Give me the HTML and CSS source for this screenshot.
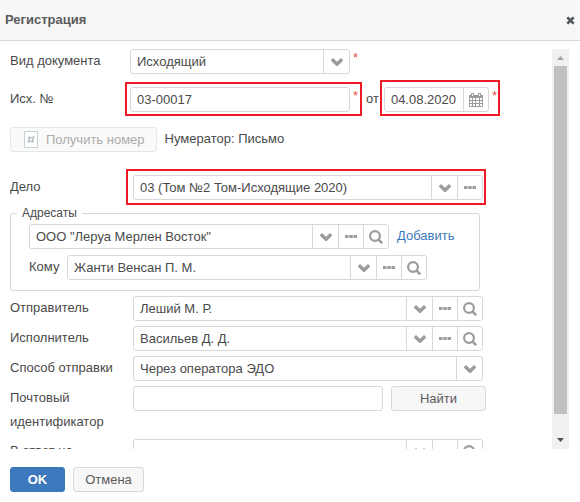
FILE: index.html
```html
<!DOCTYPE html>
<html lang="ru">
<head>
<meta charset="utf-8">
<meta name="viewport" content="width=device-width, initial-scale=1">
<title>Регистрация</title>
<link rel="stylesheet" href="styles.css">
</head>
<body>
<svg class="sprite" aria-hidden="true">
  <symbol id="chevron" viewBox="0 0 12 8"><path d="M0 2L2 0L6 3.700L10 0L12 2L12 2.800L6.700 8H5.300L0 2.800z" fill="currentColor"/></symbol>
  <symbol id="dots" viewBox="0 0 12 3"><path d="M0 0h3.500v3H0zM4.250 0h3.500v3h-3.500zM8.500 0h3.500v3H8.500z" fill="currentColor"/></symbol>
  <symbol id="search" viewBox="0 0 14 14"><circle cx="6" cy="6" r="4.900" fill="none" stroke="currentColor" stroke-width="2.200"/><path d="M9.300 9.300L13.200 13.200" stroke="currentColor" stroke-width="2.600"/></symbol>
</svg>
<div class="dialog">
  <header class="header">
    <h1 class="title">Регистрация</h1>
    <button class="close" type="button" aria-label="Закрыть"><svg width="9" height="9" viewBox="0 0 9 9"><path d="M1.300 1.300L7.700 7.700M7.700 1.300L1.300 7.700" stroke="currentColor" stroke-width="2.600"/></svg></button>
  </header>

  <div class="body">
    <form class="form" id="registration">
      <div class="row row-top">
        <label for="kind">Вид документа</label>
        <div class="group">
          <div class="combo select short">
            <select id="kind"><option>Исходящий</option></select>
            <span class="cell"><svg class="chevron"><use href="#chevron"/></svg></span>
          </div>
          <span class="required">*</span>
        </div>
      </div>

      <div class="row row-top">
        <label for="number">Исх. №</label>
        <div class="group">
          <div class="group marked">
            <div class="combo short"><input id="number" type="text" value="03-00017"></div>
            <span class="required">*</span>
          </div>
          <label class="from" for="date">от</label>
          <div class="group marked marked-date">
            <div class="combo date">
              <input id="date" type="text" value="04.08.2020">
              <button class="cell" type="button" aria-label="Календарь"><svg width="14" height="14" viewBox="0 0 14 14"><path d="M.5 2.500h13v11H.5z" fill="#fff" stroke="currentColor"/><path d="M0 2h14v3H0z" fill="currentColor"/><path d="M3.500 5v8M6.500 5v8M10.500 5v8M1 7.500h12M1 10.500h12" stroke="currentColor"/><path d="M3.500 0v3M10.500 0v3" stroke="currentColor" stroke-width="3"/><path d="M3.500 1v2M10.500 1v2" stroke="#fff"/></svg></button>
            </div>
            <span class="required">*</span>
          </div>
        </div>
      </div>

      <div class="numbering">
        <button class="button obtain" type="button" disabled>
          <svg width="14" height="17" viewBox="0 0 14 17"><path d="M.5.5h13v16H.5z" fill="#fff" stroke="#c3d2d6"/><path d="M6 5L4.500 12M9.500 5L8 12M3.500 7h7M3 10h7" stroke="#aeb4b6" fill="none"/></svg>
          Получить номер
        </button>
        <span>Нумератор: Письмо</span>
      </div>

      <div class="row case">
        <label for="case">Дело</label>
        <div class="marked marked-case">
          <div class="combo">
            <input id="case" type="text" value="03 (Том №2 Том-Исходящие 2020)">
            <button class="cell" type="button" aria-label="Список дел"><svg class="chevron"><use href="#chevron"/></svg></button>
            <button class="cell" type="button" aria-label="Выбрать дело"><svg class="dots"><use href="#dots"/></svg></button>
          </div>
        </div>
      </div>

      <fieldset class="recipients">
        <legend>Адресаты</legend>
        <div class="recipient">
          <div class="combo">
            <input type="text" aria-label="Организация" value="ООО &quot;Леруа Мерлен Восток&quot;">
            <button class="cell" type="button" aria-label="Список организаций"><svg class="chevron"><use href="#chevron"/></svg></button>
            <button class="cell" type="button" aria-label="Выбрать организацию"><svg class="dots"><use href="#dots"/></svg></button>
            <button class="cell" type="button" aria-label="Карточка организации"><svg class="search"><use href="#search"/></svg></button>
          </div>
          <a class="add" href="#">Добавить</a>
        </div>
        <div class="recipient">
          <label class="whom" for="whom">Кому</label>
          <div class="combo">
            <input id="whom" type="text" value="Жанти Венсан П. М.">
            <button class="cell" type="button" aria-label="Список контактов"><svg class="chevron"><use href="#chevron"/></svg></button>
            <button class="cell" type="button" aria-label="Выбрать контакт"><svg class="dots"><use href="#dots"/></svg></button>
            <button class="cell" type="button" aria-label="Карточка контакта"><svg class="search"><use href="#search"/></svg></button>
          </div>
        </div>
      </fieldset>

      <div class="fields">
        <div class="row">
          <label for="sender">Отправитель</label>
          <div class="combo">
            <input id="sender" type="text" value="Леший М. Р.">
            <button class="cell" type="button" aria-label="Список отправителей"><svg class="chevron"><use href="#chevron"/></svg></button>
            <button class="cell" type="button" aria-label="Выбрать отправителя"><svg class="dots"><use href="#dots"/></svg></button>
            <button class="cell" type="button" aria-label="Карточка отправителя"><svg class="search"><use href="#search"/></svg></button>
          </div>
        </div>
        <div class="row">
          <label for="executor">Исполнитель</label>
          <div class="combo">
            <input id="executor" type="text" value="Васильев Д. Д.">
            <button class="cell" type="button" aria-label="Список исполнителей"><svg class="chevron"><use href="#chevron"/></svg></button>
            <button class="cell" type="button" aria-label="Выбрать исполнителя"><svg class="dots"><use href="#dots"/></svg></button>
            <button class="cell" type="button" aria-label="Карточка исполнителя"><svg class="search"><use href="#search"/></svg></button>
          </div>
        </div>
        <div class="row">
          <label for="method">Способ отправки</label>
          <div class="combo select">
            <select id="method"><option>Через оператора ЭДО</option></select>
            <span class="cell"><svg class="chevron"><use href="#chevron"/></svg></span>
          </div>
        </div>
        <div class="row row-post">
          <label for="post">Почтовый идентификатор</label>
          <div class="post">
            <div class="combo"><input id="post" type="text"></div>
            <button class="button find" type="button">Найти</button>
          </div>
        </div>
        <div class="row">
          <label for="reply">В ответ на</label>
          <div class="combo">
            <input id="reply" type="text">
            <button class="cell" type="button" aria-label="Список документов"><svg class="chevron"><use href="#chevron"/></svg></button>
            <button class="cell" type="button" aria-label="Выбрать документ"><svg class="dots"><use href="#dots"/></svg></button>
            <button class="cell" type="button" aria-label="Карточка документа"><svg class="search"><use href="#search"/></svg></button>
          </div>
        </div>
      </div>
    </form>
    <div class="scrollbar" aria-hidden="true">
      <svg viewBox="0 0 17 17"><path d="M5 11h7L8.500 7z" fill="#a3a3a3"/></svg>
      <div class="track"><div class="thumb"></div></div>
      <svg viewBox="0 0 17 17"><path d="M5 6h7L8.500 10z" fill="#505050"/></svg>
    </div>
  </div>

  <footer class="footer">
    <button class="button ok" type="submit" form="registration">OK</button>
    <button class="button cancel" type="button">Отмена</button>
  </footer>
</div>
</body>
</html>
```
FILE: styles.css
```css
* { box-sizing: border-box; }

body {
  margin: 0;
  background: #fff;
  color: #4a4a4a;
  font: 13px/24px "Liberation Sans", Arial, sans-serif;
}

button, input, select { font: inherit; color: inherit; margin: 0; }

.sprite { display: none; }

.dialog {
  display: flex;
  flex-direction: column;
  height: 100vh;
}

.header {
  display: flex;
  align-items: center;
  justify-content: space-between;
  height: 41px;
  padding: 0 5px;
  background: #f7f7f7;
  border-bottom: 1px solid #d8d8d8;
}

.title { margin: 0; font-size: 13px; font-weight: bold; color: #5a5a5a; }

.close {
  display: flex;
  padding: 0;
  border: 0;
  background: none;
  color: #4c5558;
}

.body {
  display: flex;
  flex: 1;
  min-height: 0;
  margin: 8px 11px 0 10px;
  overflow: hidden;
}

.form { flex: 1; min-width: 0; }

.row {
  display: grid;
  grid-template-columns: 123px minmax(0, 350px);
  align-items: start;
}

.row-top { grid-template-columns: 120px 1fr; margin-bottom: 13px; }
.row-post { grid-template-columns: 123px minmax(0, 353px); }

.group { display: flex; }

.combo {
  display: flex;
  flex: 1;
  min-width: 0;
  height: 25px;
  border: 1px solid #d8d8d8;
  border-radius: 3px;
  background: #fff;
}

.combo input, .combo select {
  flex: 1;
  width: 100%;
  min-width: 0;
  height: 23px;
  padding: 0 6px;
  border: 0;
  outline: 0;
  background: none;
  appearance: none;
}

.short { flex: none; width: 220px; }
.date { flex: none; width: 105px; }

.cell {
  display: flex;
  flex: none;
  align-items: center;
  justify-content: center;
  width: 26px;
  padding: 0;
  border: 0;
  border-left: 1px solid #d8d8d8;
  background: none;
  color: #9c9c9c;
}

.cell + .cell, .date .cell { width: 25px; }

.select { display: grid; grid-template-columns: 1fr 26px; }
.select select { grid-area: 1 / 1 / 2 / 3; }
.select .cell { grid-area: 1 / 2; pointer-events: none; }

.chevron { width: 12px; height: 8px; }
.dots { width: 12px; height: 3px; }
.search { width: 14px; height: 14px; }

.required {
  width: 8px;
  padding-left: 3px;
  color: #e8504a;
  line-height: 17px;
}

.from { padding: 0 5px 0 8px; }

.marked { position: relative; }

.marked::after {
  content: "";
  position: absolute;
  inset: -5px -4px -4px -5px;
  border: 2px solid #ed1c24;
  pointer-events: none;
}

.marked-date::after { inset: -7px -3px -4px -4px; }
.marked-case::after { inset: -6px -3px -5px -7px; }

.numbering { display: flex; gap: 8px; margin: 15px 0 23px; }

.button {
  height: 25px;
  padding: 0;
  border: 1px solid #d8d8d8;
  border-radius: 3px;
  background: #f7f7f7;
  color: #5a5a5a;
  line-height: 23px;
}

.obtain {
  display: flex;
  align-items: center;
  gap: 8px;
  padding: 0 11px 0 13px;
  border-color: #e6e6e6;
  background: #fafafa;
  color: #aaa;
}

.recipients {
  max-width: 470px;
  margin: 6px 0 5px;
  padding: 4px 18px 10px;
  border: 1px solid #d8d8d8;
  border-radius: 3px;
}

.recipients legend {
  margin-left: -12px;
  padding: 0 5px;
  font-size: 12px;
  line-height: 14px;
}

.recipient { display: flex; }
.recipient + .recipient { margin-top: 6px; }
.recipient .combo { flex: 0 1 360px; }
.whom { width: 38px; }
.add { margin-left: 8px; color: #3d78bd; text-decoration: none; }

.fields { display: grid; gap: 5px; }

.post { display: flex; gap: 8px; }
.find { width: 95px; }

.scrollbar {
  display: flex;
  flex-direction: column;
  flex: none;
  width: 17px;
  background: #f1f1f1;
}

.scrollbar svg { flex: none; width: 17px; height: 17px; }
.track { flex: 1; padding: 0 2px; }
.thumb { height: 95%; background: #c1c1c1; }

.footer { display: flex; gap: 8px; padding: 18px 10px 10px; }
.ok { width: 55px; border-color: #3d78bd; background: #3d78bd; color: #fff; font-weight: bold; }
.cancel { width: 71px; }
```
